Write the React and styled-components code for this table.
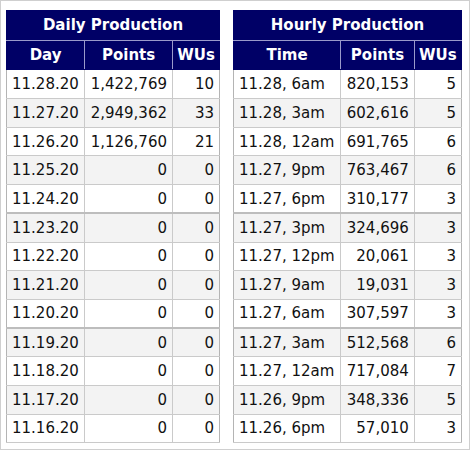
import React from 'react';
import styled, { createGlobalStyle } from 'styled-components';

const GlobalStyle = createGlobalStyle`
  body {
    margin: 0;
    background: #fff;
    font-family: "DejaVu Sans", Verdana, sans-serif;
  }
`;

const Frame = styled.div`
  box-sizing: border-box;
  width: 470px;
  height: 450px;
  border: 1px solid #cfcfcf;
  padding: 9px 0 0 5px;
  display: flex;
  gap: 13px;
  align-items: flex-start;
`;

const Table = styled.table`
  border-collapse: collapse;
  width: ${p => p.$width}px;
  border: 1px solid #b4b4b4;
  font-size: 15px;
  color: #111;
`;

const TitleCell = styled.th`
  background: #000066;
  color: #fff;
  font-weight: bold;
  text-align: center;
  height: 28.7px;
  padding: 0;
  border: 1px solid #000066;
  border-bottom: 1px solid #9a9acb;
`;

const HeadCell = styled.th`
  background: #000066;
  color: #fff;
  font-weight: bold;
  text-align: center;
  height: 28.7px;
  padding: 0 4px;
  width: ${p => p.$w}px;
  border: 1px solid #9a9acb;
  border-top: none;
  border-bottom: 1px solid #000066;
  &:first-child { border-left-color: #000066; }
  &:last-child { border-right-color: #000066; }
`;

const Row = styled.tr`
  background: ${p => (p.$odd ? '#f3f3f3' : '#fff')};
  height: 28.7px;
  border-bottom: ${p => (p.$strong ? '2px solid #bdbdbd' : '1px solid #cacaca')};
`;

const Cell = styled.td`
  padding: 0 5px;
  text-align: ${p => (p.$right ? 'right' : 'left')};
  border-right: 1px solid #cacaca;
  white-space: nowrap;
  &:last-child { border-right: none; }
`;

const daily = [
  ['11.28.20', '1,422,769', '10'],
  ['11.27.20', '2,949,362', '33'],
  ['11.26.20', '1,126,760', '21'],
  ['11.25.20', '0', '0'],
  ['11.24.20', '0', '0'],
  ['11.23.20', '0', '0'],
  ['11.22.20', '0', '0'],
  ['11.21.20', '0', '0'],
  ['11.20.20', '0', '0'],
  ['11.19.20', '0', '0'],
  ['11.18.20', '0', '0'],
  ['11.17.20', '0', '0'],
  ['11.16.20', '0', '0'],
];

const hourly = [
  ['11.28, 6am', '820,153', '5'],
  ['11.28, 3am', '602,616', '5'],
  ['11.28, 12am', '691,765', '6'],
  ['11.27, 9pm', '763,467', '6'],
  ['11.27, 6pm', '310,177', '3'],
  ['11.27, 3pm', '324,696', '3'],
  ['11.27, 12pm', '20,061', '3'],
  ['11.27, 9am', '19,031', '3'],
  ['11.27, 6am', '307,597', '3'],
  ['11.27, 3am', '512,568', '6'],
  ['11.27, 12am', '717,084', '7'],
  ['11.26, 9pm', '348,336', '5'],
  ['11.26, 6pm', '57,010', '3'],
];

// rows 5 and 9 have the heavier rule in the screenshot
const strongRows = [4, 8];

const Production = ({ title, cols, widths, width, rows, pointsRight }) => (
  <Table $width={width}>
    <thead>
      <tr>
        <TitleCell colSpan={3}>{title}</TitleCell>
      </tr>
      <tr>
        {cols.map((c, i) => (
          <HeadCell key={c} $w={widths[i]}>{c}</HeadCell>
        ))}
      </tr>
    </thead>
    <tbody>
      {rows.map((r, i) => (
        <Row key={r[0]} $odd={i % 2 === 1} $strong={strongRows.includes(i)}>
          <Cell>{r[0]}</Cell>
          <Cell $right={pointsRight}>{r[1]}</Cell>
          <Cell $right>{r[2]}</Cell>
        </Row>
      ))}
    </tbody>
  </Table>
);

const App = () => (
  <>
    <GlobalStyle />
    <Frame>
      <Production
        title="Daily Production"
        cols={['Day', 'Points', 'WUs']}
        widths={[80, 88, 46]}
        width={214}
        rows={daily}
        pointsRight
      />
      <Production
        title="Hourly Production"
        cols={['Time', 'Points', 'WUs']}
        widths={[106, 76, 47]}
        width={229}
        rows={hourly}
        pointsRight
      />
    </Frame>
  </>
);

export default App;
